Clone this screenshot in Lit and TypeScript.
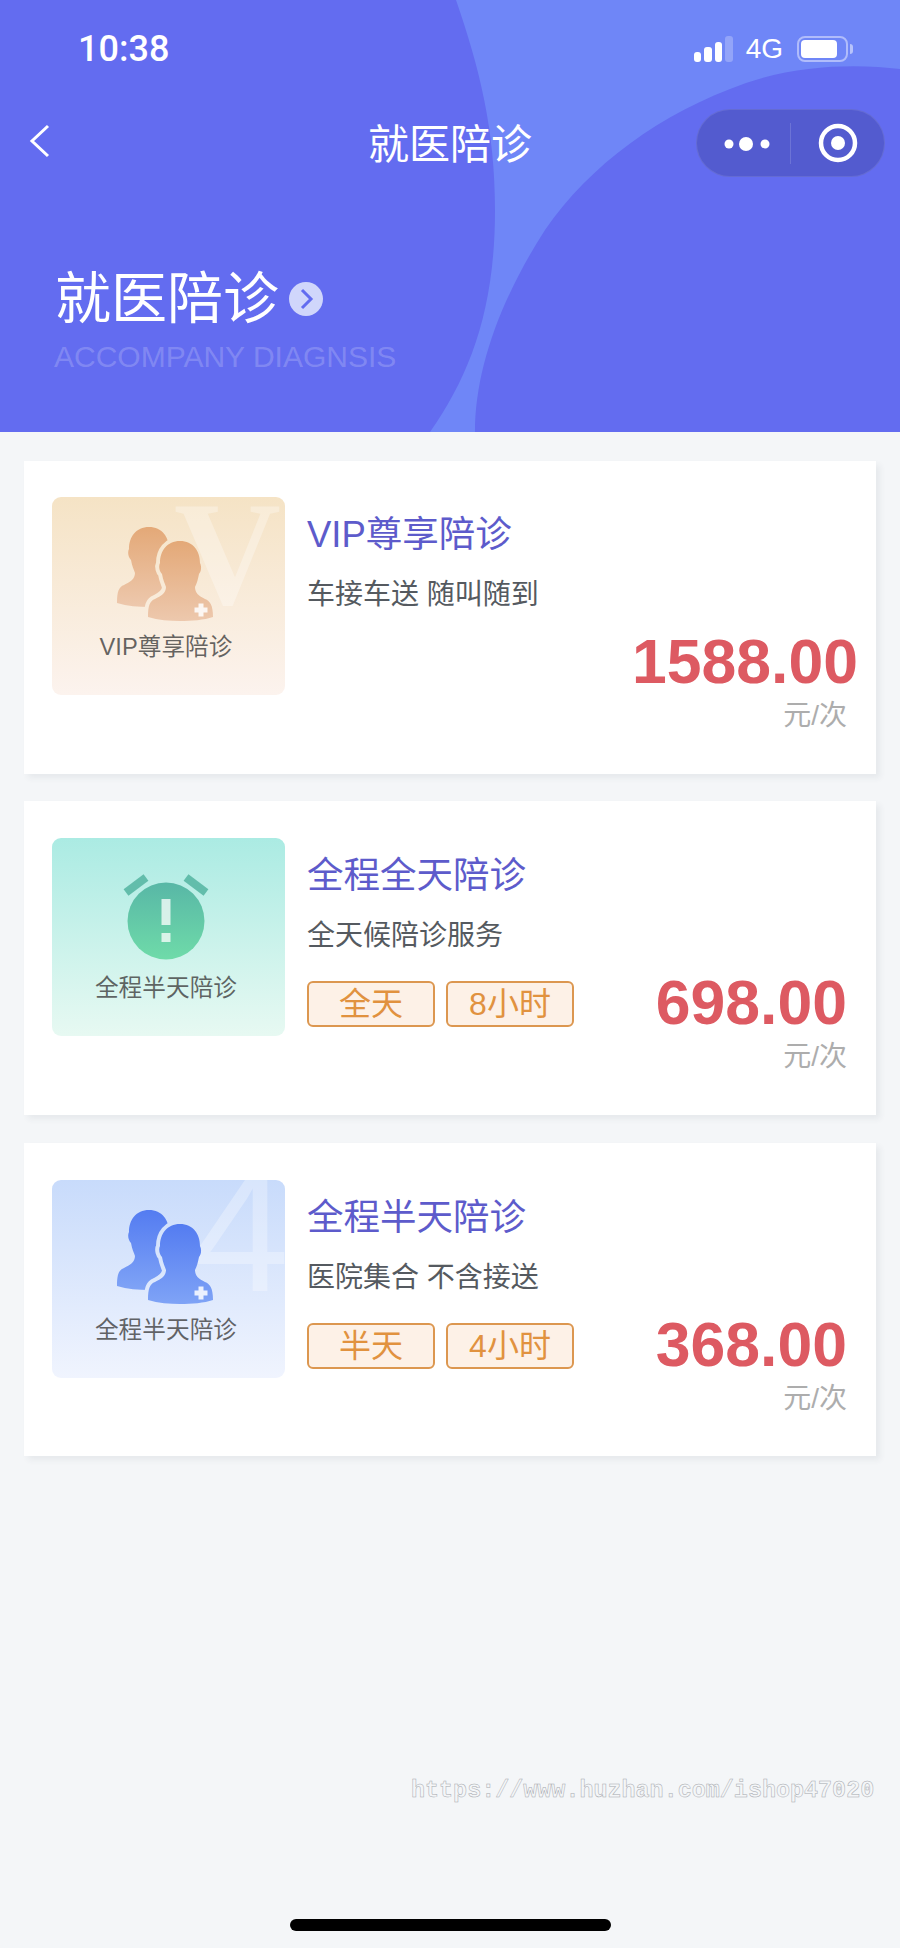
import { LitElement, html, css, svg } from "lit";
import { customElement } from "lit/decorators.js";

type Service = {
  id: string;
  art: "vip" | "clock" | "half";
  tile: string;
  label: string;
  title: string;
  desc: string;
  tags: string[];
  price: string;
};

const services: Service[] = [
  { id: "a", art: "vip", tile: "tile-orange", label: "VIP尊享陪诊", title: "VIP尊享陪诊", desc: "车接车送 随叫随到", tags: [], price: "1588.00" },
  { id: "b", art: "clock", tile: "tile-green", label: "全程半天陪诊", title: "全程全天陪诊", desc: "全天候陪诊服务", tags: ["全天", "8小时"], price: "698.00" },
  { id: "c", art: "half", tile: "tile-blue", label: "全程半天陪诊", title: "全程半天陪诊", desc: "医院集合 不含接送", tags: ["半天", "4小时"], price: "368.00" },
];

const PERSON =
  "M128 44C115 44 108 54 108 66C106 70 108 75 110 77C111 83 113 87 114 90C114 96 109 99 103 102C98 104 96 108 96 120C106 123 118 124 128 124C140 124 152 123 161 120C161 108 158 104 153 102C147 99 143 96 143 90C145 86 146 82 147 77C149 75 150 70 148 66C148 54 141 44 128 44Z";

function people(id: string, top: string, bottom: string) {
  return svg`
    <defs>
      <linearGradient id="g-${id}" gradientUnits="userSpaceOnUse" x1="0" y1="30" x2="0" y2="124">
        <stop offset="0" stop-color=${top}></stop>
        <stop offset="1" stop-color=${bottom}></stop>
      </linearGradient>
      <mask id="m-${id}" maskUnits="userSpaceOnUse" x="0" y="0" width="233" height="198">
        <rect width="233" height="198" fill="#fff"></rect>
        <path d=${PERSON} fill="#000" stroke="#000" stroke-width="8"></path>
      </mask>
    </defs>
    <g mask="url(#m-${id})"><path d=${PERSON} transform="translate(-31 -14)" fill="url(#g-${id})"></path></g>
    <path d=${PERSON} fill="url(#g-${id})"></path>
    <path d="M142.500 110.500h4v-4h5v4h4v5h-4v4h-5v-4h-4z" fill="#fff" fill-opacity=".85"></path>`;
}

function art(s: Service) {
  if (s.art === "vip") {
    return svg`<svg class="art" viewBox="0 0 233 198">
      <text x="122" y="107" class="mark-serif">V</text>
      ${people(s.id, "#E2A36E", "#EDC8AD")}
    </svg>`;
  }
  if (s.art === "half") {
    return svg`<svg class="art" viewBox="0 0 233 198">
      <text x="140" y="111" class="mark-sans">4</text>
      ${people(s.id, "#4C75F0", "#7FA3F6")}
    </svg>`;
  }
  return svg`<svg class="art" viewBox="0 0 233 198">
    <defs>
      <linearGradient id="g-${s.id}" x1="0" y1="0" x2="0" y2="1">
        <stop offset="0" stop-color="#58B7A6"></stop>
        <stop offset="1" stop-color="#6FDBA9"></stop>
      </linearGradient>
    </defs>
    <rect x="71.500" y="43" width="25" height="8" fill="#62BDAB" transform="rotate(-37 84 47)"></rect>
    <rect x="131.500" y="43" width="25" height="8" fill="#62BDAB" transform="rotate(37 144 47)"></rect>
    <circle cx="114" cy="83" r="38.500" fill="url(#g-${s.id})"></circle>
    <rect x="109.500" y="61" width="9" height="26" fill="#fff" fill-opacity=".75"></rect>
    <rect x="109.500" y="95" width="9" height="9" fill="#fff" fill-opacity=".75"></rect>
  </svg>`;
}

@customElement("app-root")
export class AppRoot extends LitElement {
  static styles = css`
    :host { display: block; font-family: "Liberation Sans", "Noto Sans CJK SC", sans-serif; }
    .page { position: relative; min-height: 1948px; display: flex; flex-direction: column; background: #F4F6F8; overflow: hidden; }

    .head { position: relative; height: 432px; background: #636CF0; color: #fff; overflow: hidden; flex: none; }
    .waves { position: absolute; inset: 0; width: 900px; height: 432px; }
    .head-in { position: relative; display: flex; flex-direction: column; }

    .status { height: 98px; display: flex; align-items: center; padding: 0 52px 0 78px; }
    .time { font-family: Roboto, sans-serif; font-size: 36px; font-weight: 500; flex: 1; }
    .signal { display: flex; align-items: flex-end; gap: 3px; height: 26px; margin-right: 13px; }
    .signal i { display: block; width: 7.500px; background: #fff; border-radius: 3px; }
    .signal i:nth-child(1) { height: 10px; }
    .signal i:nth-child(2) { height: 15px; }
    .signal i:nth-child(3) { height: 20px; }
    .signal i:nth-child(4) { height: 26px; opacity: .25; }
    .net { font-size: 28px; margin-right: 14px; }
    .battery { width: 51px; height: 26px; box-sizing: border-box; border: 2px solid rgba(255,255,255,.45); border-radius: 8px; padding: 2px 9px 2px 2px; position: relative; }
    .battery b { display: block; height: 100%; background: #fff; border-radius: 4px; }
    .battery::after { content: ""; position: absolute; right: -7px; top: 6px; width: 3px; height: 10px; background: rgba(255,255,255,.5); border-radius: 0 3px 3px 0; }

    .nav { margin-top: 11px; height: 68px; display: grid; grid-template-columns: 1fr auto 1fr; grid-template-rows: 68px; align-items: center; padding: 0 15px; }
    .back { width: 22px; height: 34px; margin: -4px 0 0 14px; display: block; }
    .nav-title { font-size: 41px; line-height: 72px; align-self: start; }
    .capsule { justify-self: end; width: 189px; height: 68px; box-sizing: border-box; border-radius: 34px; background: #535BCF; border: 1px solid rgba(255,255,255,.1); display: block; }
    .capsule svg { display: block; width: 187px; height: 66px; }

    .hero { margin-top: 87px; padding-left: 55px; display: flex; align-items: center; gap: 10px; height: 70px; }
    .hero h1 { margin: 0; font-size: 56px; line-height: 70px; font-weight: 400; }
    .hero svg { width: 34px; height: 34px; display: block; }
    .en { margin: 5px 0 0 54px; font-size: 30px; line-height: 36px; color: rgba(255,255,255,.2); }

    .list { padding: 29px 24px 0; display: flex; flex-direction: column; gap: 28px; }
    .card { height: 313px; box-sizing: border-box; background: #fff; box-shadow: 4px 4px 6px rgba(60,70,90,.07); padding: 36px 19px 0 28px; display: grid; grid-template-columns: 233px 1fr; column-gap: 22px; }
    .card:nth-child(2) { margin-top: -1px; height: 314px; padding-top: 37px; }
    .card:nth-child(3) { padding-top: 37px; }

    .tile { position: relative; height: 198px; border-radius: 9px; overflow: hidden; }
    .tile-orange { background: linear-gradient(#F5E3C5, #FCF3EE); }
    .tile-green { background: linear-gradient(#ABEBE3, #E7F9F2); }
    .tile-blue { background: linear-gradient(#C8DBFB, #F0F4FE); }
    .art { position: absolute; inset: 0; width: 233px; height: 198px; }
    .mark-serif { font-family: "Liberation Serif", serif; font-size: 148px; fill: #fff; fill-opacity: .3; font-weight: 700; }
    .mark-sans { font-family: "Liberation Sans", sans-serif; font-size: 175px; fill: #fff; fill-opacity: .3; }
    .tile-label { position: absolute; left: 0; width: 228px; top: 133px; text-align: center; font-size: 23.700px; line-height: 34px; color: rgba(60,60,60,.78); }

    .info { display: flex; flex-direction: column; min-width: 0; }
    .title { font-size: 36.500px; line-height: 46px; color: #5D5BCB; margin-top: 15px; }
    .desc { font-size: 28px; line-height: 40px; color: #555A60; margin-top: 17px; }
    .foot { display: flex; justify-content: space-between; align-items: flex-start; margin-top: 25px; }
    .tags { display: flex; gap: 11px; }
    .tag { width: 128px; height: 46px; box-sizing: border-box; border: 2px solid #DC9750; border-radius: 6px; background: #FDF1E7; color: #E1923F; font-size: 32px; line-height: 42px; text-align: center; }
    .cost { display: flex; flex-direction: column; align-items: flex-end; padding-right: 10px; margin-top: -14px; }
    .price { font-size: 62.500px; line-height: 70px; font-weight: 700; color: #DD5A62; }
    .cost-wide .price { margin-right: -11px; }
    .unit { font-size: 28px; line-height: 36px; color: #ADADAD; margin-top: 2px; }

    .watermark { position: absolute; left: 411px; top: 1776px; font-family: "Liberation Mono", monospace; font-weight: 700; font-size: 23.400px; line-height: 30px; color: transparent; -webkit-text-stroke: .5px #A6A9AE; white-space: nowrap; }
    .home { margin: auto 0 17px; align-self: center; width: 321px; height: 12px; border-radius: 6px; background: #000; }
  `;

  render() {
    return html`
      <div class="page">
        <header class="head">
          <svg class="waves" viewBox="0 0 900 432">
            <path d="M456 0C480 70 495 130 495 210C495 310 470 375 430 432L900 432L900 0Z" fill="#6F86F7"></path>
            <path d="M900 69C860 64 800 64 746 83C660 113 590 165 545 230C500 300 475 370 475 432L900 432Z" fill="#636CF0"></path>
          </svg>
          <div class="head-in">
            <div class="status">
              <span class="time">10:38</span>
              <span class="signal"><i></i><i></i><i></i><i></i></span>
              <span class="net">4G</span>
              <span class="battery"><b></b></span>
            </div>
            <div class="nav">
              <svg class="back" viewBox="0 0 22 34"><path d="M19 2L3 17L19 32" fill="none" stroke="#fff" stroke-width="3"></path></svg>
              <span class="nav-title">就医陪诊</span>
              <span class="capsule">
                <svg viewBox="0 0 187 66">
                  <circle cx="32" cy="34" r="4.500" fill="#fff"></circle>
                  <circle cx="49" cy="34" r="7" fill="#fff"></circle>
                  <circle cx="68" cy="34" r="4.500" fill="#fff"></circle>
                  <rect x="93" y="13" width="1" height="41" fill="#fff" fill-opacity=".15"></rect>
                  <circle cx="141" cy="33" r="17" fill="none" stroke="#fff" stroke-width="4.500"></circle>
                  <circle cx="141" cy="33" r="7" fill="#fff"></circle>
                </svg>
              </span>
            </div>
            <div class="hero">
              <h1>就医陪诊</h1>
              <svg viewBox="0 0 34 34"><circle cx="17" cy="17" r="17" fill="#D0D6FB"></circle><path d="M13 8L22 17L13 26" fill="none" stroke="#636CF0" stroke-width="3"></path></svg>
            </div>
            <p class="en">ACCOMPANY DIAGNSIS</p>
          </div>
        </header>

        <section class="list">
          ${services.map(
            (s) => html`
              <article class="card">
                <div class="tile ${s.tile}">
                  ${art(s)}
                  <span class="tile-label">${s.label}</span>
                </div>
                <div class="info">
                  <div class="title">${s.title}</div>
                  <div class="desc">${s.desc}</div>
                  <div class="foot">
                    <div class="tags">${s.tags.map((t) => html`<span class="tag">${t}</span>`)}</div>
                    <div class="cost ${s.tags.length ? "" : "cost-wide"}">
                      <span class="price">${s.price}</span>
                      <span class="unit">元/次</span>
                    </div>
                  </div>
                </div>
              </article>
            `
          )}
        </section>

        <div class="watermark">https://www.huzhan.com/ishop47020</div>
        <div class="home"></div>
      </div>
    `;
  }
}
